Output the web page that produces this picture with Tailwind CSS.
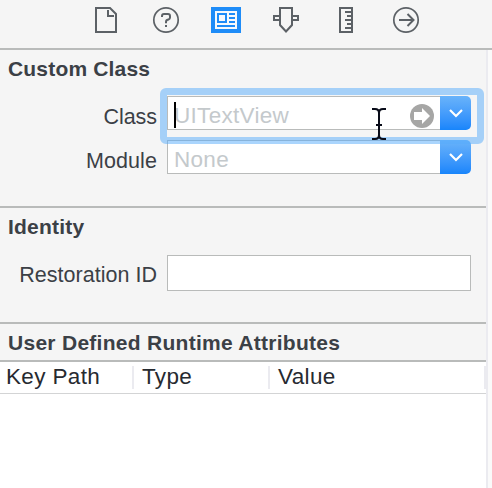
<!DOCTYPE html>
<html lang="en">
<head>
<meta charset="utf-8">
<title>Identity Inspector</title>
<script src="https://cdn.jsdelivr.net/npm/@tailwindcss/browser@4"></script>
</head>
<body class="w-[492px] h-[488px] overflow-hidden bg-[#f5f5f5] font-['Liberation_Sans',Arial,sans-serif] text-[#3b4046]">
<div class="flex h-full flex-col">
  <nav class="flex h-[50px] shrink-0 gap-[30px] border-b-2 border-[#b9bbba] pl-[91px] pt-[5px]">
    <svg class="h-[30px] w-[30px]" viewBox="0 0 30 30" fill="none" stroke="#5c6166" stroke-width="2"><path d="M5 3H19L25 9V27H5ZM17 5V11H23"/></svg>
    <svg class="h-[30px] w-[30px]" viewBox="0 0 30 30" fill="none" stroke="#5c6166"><circle cx="15" cy="15" r="12.2" stroke-width="1.7"/><path stroke-width="2" d="M11 12V11Q11 9 13 9H17Q19 9 19 11V12.5Q19 14 17.5 14.5L16 15Q15 15.5 15 17V18.2M15 20V22"/></svg>
    <svg class="h-[30px] w-[30px]" viewBox="0 0 30 30"><path fill="#1e8cf8" d="M0 2H30V28H0Z"/><path fill="#f6f9fc" d="M4 6H26V24H4Z"/><path fill="none" stroke="#1e8cf8" stroke-width="2" d="M7 9H15V17H7ZM18 9H24M18 13H24M18 17H24M6 21H24"/></svg>
    <svg class="h-[30px] w-[30px]" viewBox="0 0 30 30" fill="none" stroke="#5c6166" stroke-width="2"><path d="M9 3H21V20L15 26.5L9 20ZM9 11H3V15H9M21 11H27V15H21"/></svg>
    <svg class="h-[30px] w-[30px]" viewBox="0 0 30 30" fill="none" stroke="#5c6166" stroke-width="2"><path d="M9 3H21V27H9ZM14 7H21M16 11H21M14 15H21M16 19H21M14 23H21"/></svg>
    <svg class="h-[30px] w-[30px]" viewBox="0 0 30 30" fill="none" stroke="#5c6166"><circle cx="15" cy="15" r="12.2" stroke-width="1.7"/><path stroke-width="2" d="M8 15H22M16.5 9L22.5 15L16.5 21"/></svg>
  </nav>
  <div class="flex min-h-0 flex-1">
    <main class="flex w-[486px] flex-col">
      <section class="h-[158px] shrink-0 border-b-2 border-[#b9bbba]">
        <h2 class="h-[46px] pl-[8px] pt-[7px] text-[21px] leading-[24px] font-bold tracking-[0.18px] whitespace-nowrap">Custom Class</h2>
        <div class="flex h-[34px] gap-[10px]">
          <label class="w-[157px] pt-[8px] text-right text-[21.5px] leading-[26px] tracking-[-0.05px]">Class</label>
          <div class="relative flex h-[34px] w-[304px]">
            <div class="flex w-[273px] items-center border border-r-0 border-[#b9bbba] bg-white pl-[6px] pt-[6px] text-[22.5px] leading-[26px] tracking-[0.3px] text-[#c4c9cc]">UITextView</div>
            <div class="flex w-[31px] items-center justify-center rounded-r-[5px] bg-linear-to-b from-[#69b3fa] to-[#1785fb]">
              <svg class="h-[12px] w-[16px]" viewBox="0 0 16 12" fill="none" stroke="white" stroke-width="2.2"><path d="M2 3L8 9L14 3"/></svg>
            </div>
            <div class="absolute -left-[7px] -top-[8px] z-10 h-[56px] w-[324px] rounded-[6px] border-[7px] border-[#55abfc]/50"></div>
            <div class="absolute left-[7px] top-[6px] h-[26px] w-[2px] bg-black"></div>
            <svg class="absolute left-[243px] top-[8px] h-[24px] w-[24px]" viewBox="0 0 24 24"><circle cx="12" cy="12" r="12" fill="#a6a6a5"/><path fill="white" d="M4 8H12V4L20 12L12 20V16H4Z"/></svg>
            <svg class="absolute left-[203px] top-[11px] z-20 h-[34px] w-[18px]" viewBox="0 0 18 34" fill="none"><path stroke="#080b18" stroke-width="2" d="M2 2H5Q9 2 9 6Q9 2 13 2H16M9 5V28M2 32H5Q9 32 9 28Q9 32 13 32H16M6 18H12"/></svg>
          </div>
        </div>
        <div class="mt-[10px] flex h-[34px] gap-[10px]">
          <label class="w-[157px] pt-[8px] text-right text-[21.5px] leading-[26px] tracking-[0.1px]">Module</label>
          <div class="flex h-[34px] w-[304px]">
            <div class="flex w-[273px] items-center border border-r-0 border-[#b9bbba] bg-white pl-[6px] pt-[6px] text-[22.5px] leading-[26px] tracking-[0.3px] text-[#c4c9cc]">None</div>
            <div class="flex w-[31px] items-center justify-center rounded-r-[5px] bg-linear-to-b from-[#69b3fa] to-[#1785fb]">
              <svg class="h-[12px] w-[16px]" viewBox="0 0 16 12" fill="none" stroke="white" stroke-width="2.2"><path d="M2 3L8 9L14 3"/></svg>
            </div>
          </div>
        </div>
      </section>
      <section class="h-[116px] shrink-0 border-b-2 border-[#b9bbba]">
        <h2 class="h-[47px] pl-[8px] pt-[7px] text-[21px] leading-[24px] font-bold tracking-[0.2px]">Identity</h2>
        <div class="flex h-[36px] gap-[10px]">
          <label class="w-[157px] pt-[7px] text-right text-[21.5px] leading-[26px] tracking-[0.02px] whitespace-nowrap">Restoration ID</label>
          <div class="w-[304px] border border-[#b9bbba] bg-white"></div>
        </div>
      </section>
      <section class="flex flex-1 flex-col">
        <h2 class="h-[38px] shrink-0 border-b-2 border-[#b9bbba] pl-[8px] pt-[7px] text-[21px] leading-[24px] font-bold tracking-[0.28px] whitespace-nowrap">User Defined Runtime Attributes</h2>
        <div class="flex h-[32px] shrink-0 border-b border-[#d3d4d5] bg-white py-[4px] text-[22.5px] leading-[22px] tracking-[0.35px] text-[#262a30]">
          <div class="w-[134px] border-r-2 border-[#ebebf0] pl-[6px]">Key Path</div>
          <div class="w-[136px] border-r-2 border-[#ebebf0] pl-[8px]">Type</div>
          <div class="flex-1 border-r-2 border-[#ebebf0] pl-[8px]">Value</div>
        </div>
        <div class="flex-1 bg-white"></div>
      </section>
    </main>
    <aside class="w-[6px] border-l-2 border-[#ebebf0] bg-[#fafafa]"></aside>
  </div>
</div>
</body>
</html>
